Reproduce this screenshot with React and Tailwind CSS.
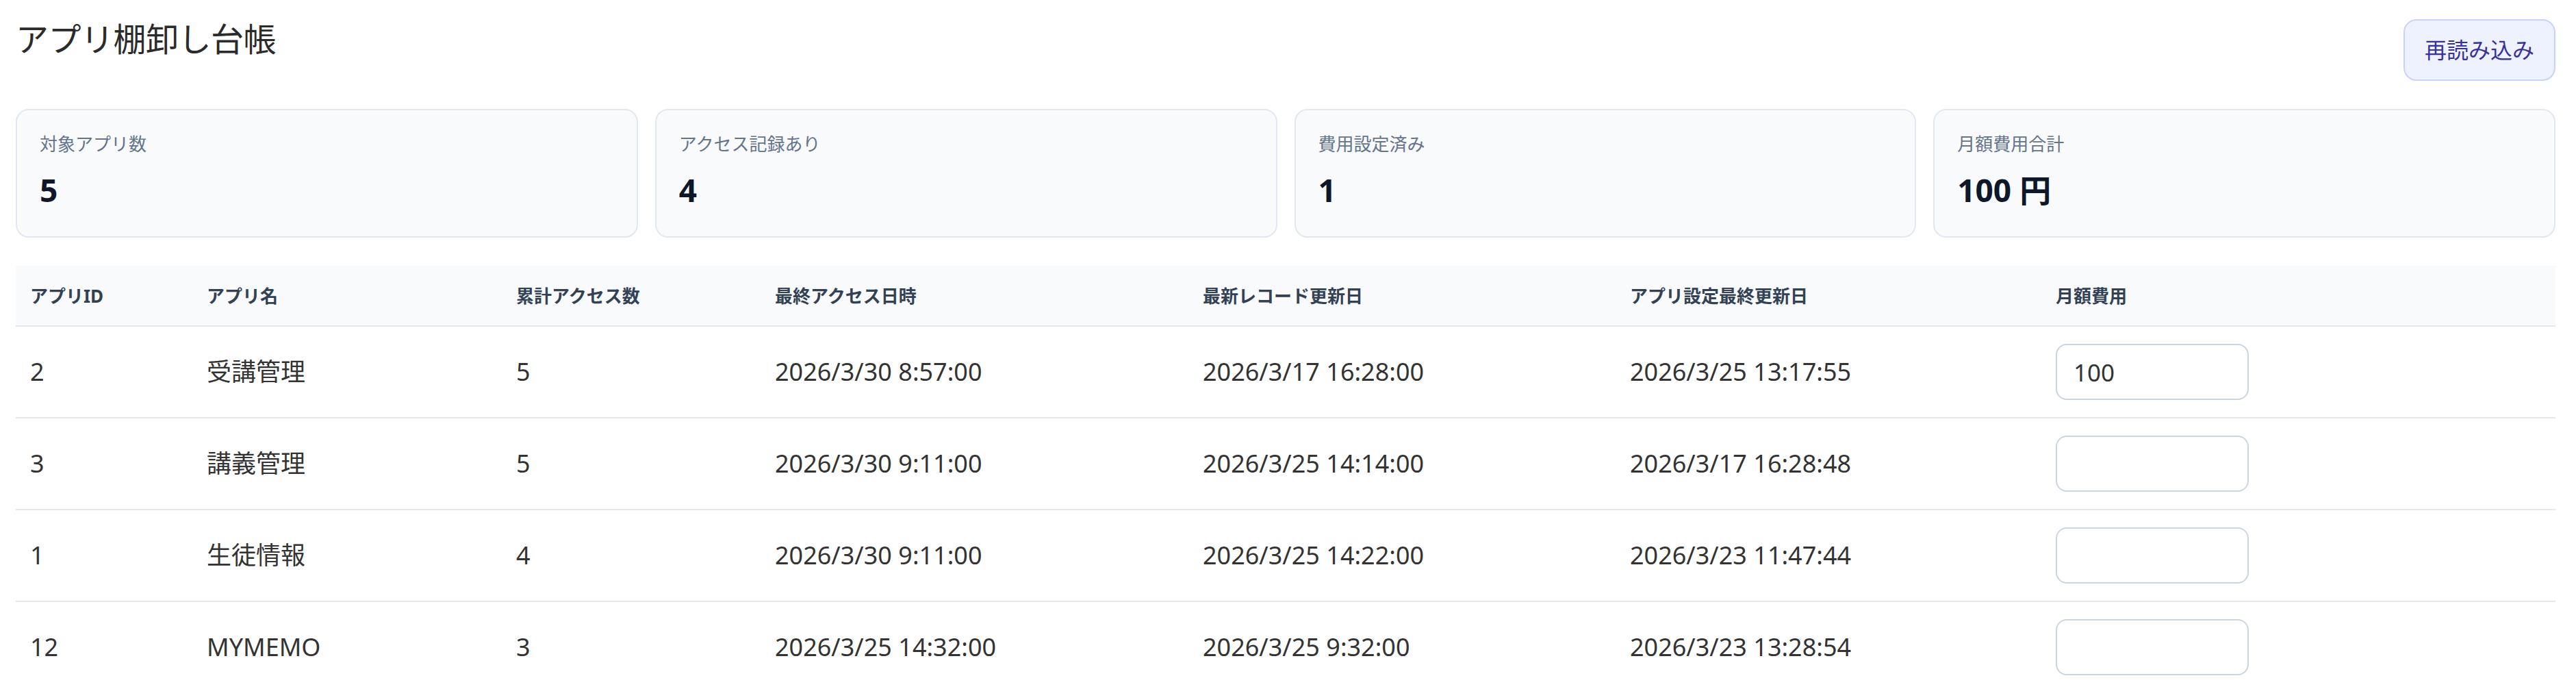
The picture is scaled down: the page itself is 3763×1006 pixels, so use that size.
import React from "react";

const stats = [
  { label: "対象アプリ数", value: "5" },
  { label: "アクセス記録あり", value: "4" },
  { label: "費用設定済み", value: "1" },
  { label: "月額費用合計", value: "100 円" },
];

const headers = [
  "アプリID",
  "アプリ名",
  "累計アクセス数",
  "最終アクセス日時",
  "最新レコード更新日",
  "アプリ設定最終更新日",
  "月額費用",
];

const rows = [
  ["2", "受講管理", "5", "2026/3/30 8:57:00", "2026/3/17 16:28:00", "2026/3/25 13:17:55", "100"],
  ["3", "講義管理", "5", "2026/3/30 9:11:00", "2026/3/25 14:14:00", "2026/3/17 16:28:48", ""],
  ["1", "生徒情報", "4", "2026/3/30 9:11:00", "2026/3/25 14:22:00", "2026/3/23 11:47:44", ""],
  ["12", "MYMEMO", "3", "2026/3/25 14:32:00", "2026/3/25 9:32:00", "2026/3/23 13:28:54", ""],
];

const cols =
  "grid grid-cols-[258px_452px_378px_625px_624px_622px_1fr] items-center";

export default function App() {
  return (
    <div className="h-[1006px] overflow-hidden bg-white font-['Noto_Sans','Noto_Sans_CJK_JP',sans-serif]">
      <div className="pl-[23px] pr-[30px] pt-[28px]">
        <div className="flex items-start justify-between">
          <h1 className="text-[48px] leading-[58px] font-normal text-[#2b2b2b] tracking-[-0.5px]">
            アプリ棚卸し台帳
          </h1>
          <button className="h-[90px] px-[29px] rounded-[19px] border-2 border-[#c7d2fe] bg-[#eef2ff] text-[32px] leading-none text-[#3730a3]">
            再読み込み
          </button>
        </div>

        <div className="mt-[41px] grid grid-cols-4 gap-[25px]">
          {stats.map((s) => (
            <div
              key={s.label}
              className="h-[188px] rounded-[19px] border-2 border-[#e2e8f0] bg-[#f8fafc] pl-[33px] pt-[31px]"
            >
              <div className="text-[26px] leading-[36px] text-[#64748b]">{s.label}</div>
              <div className="mt-[21px] text-[46px] leading-[56px] font-bold text-[#0f172a]">
                {s.value}
              </div>
            </div>
          ))}
        </div>

        <div className="mt-[41px]">
          <div className={`${cols} h-[89px] bg-[#f8fafc] border-b-2 border-[#e2e8f0]`}>
            {headers.map((h) => (
              <div
                key={h}
                className="pl-[21px] text-[26px] leading-[36px] font-bold text-[#334155] whitespace-nowrap"
              >
                {h}
              </div>
            ))}
          </div>
          {rows.map((r) => (
            <div key={r[0]} className={`${cols} h-[134px] border-b-2 border-[#e5e7eb]`}>
              {r.slice(0, 6).map((c, i) => (
                <div
                  key={i}
                  className="pl-[21px] text-[36px] leading-[48px] text-[#333333] whitespace-nowrap"
                >
                  {c}
                </div>
              ))}
              <div className="pl-[21px]">
                <input
                  type="text"
                  defaultValue={r[6]}
                  className="w-[282px] h-[82px] rounded-[16px] border-2 border-[#cbd5e1] bg-white pl-[24px] text-[35px] text-[#333333] outline-none"
                />
              </div>
            </div>
          ))}
        </div>
      </div>
    </div>
  );
}
